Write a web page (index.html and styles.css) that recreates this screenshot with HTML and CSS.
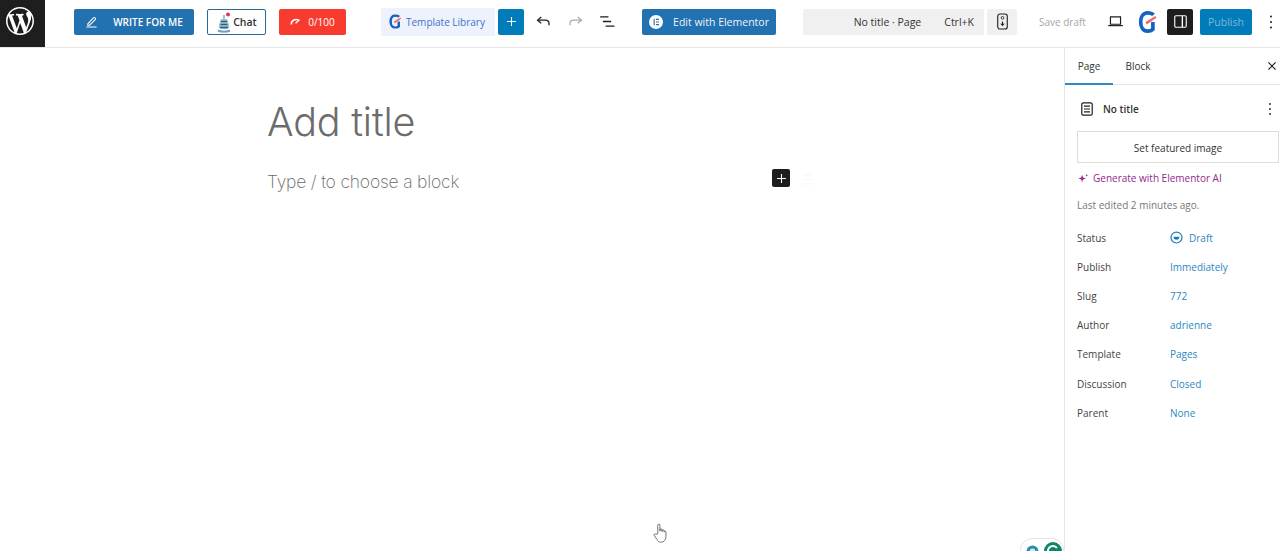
FILE: index.html
```html
<!DOCTYPE html>
<html lang="en">
<head>
<meta charset="utf-8">
<title>Add title</title>
<link rel="stylesheet" href="styles.css">
</head>
<body>
<div class="app">
  <header class="topbar">
    <a class="wp-logo"><svg viewBox="0 0 20 20" width="28" height="28"><path fill="#fff" fill-rule="evenodd" d="M20 10c0-5.51-4.49-10-10-10C4.48 0 0 4.49 0 10c0 5.52 4.48 10 10 10 5.51 0 10-4.48 10-10zM7.78 15.37L4.37 6.22c.55-.02 1.17-.08 1.17-.08.5-.06.44-1.13-.06-1.11 0 0-1.45.11-2.37.11-.18 0-.37 0-.58-.01C4.12 2.69 6.87 1.11 10 1.11c2.33 0 4.45.87 6.05 2.34-.68-.11-1.65.39-1.65 1.58 0 .74.45 1.36.9 2.1.35.61.55 1.36.55 2.46 0 1.49-1.4 5-1.4 5l-3.03-8.37c.54-.02.82-.17.82-.17.5-.05.44-1.25-.06-1.22 0 0-1.44.12-2.38.12-.87 0-2.33-.12-2.33-.12-.5-.03-.56 1.2-.06 1.22l.92.08 1.26 3.41zM17.41 10c.24-.64.74-1.87.43-4.25.7 1.29 1.05 2.71 1.05 4.25 0 3.29-1.73 6.24-4.4 7.78.97-2.59 1.94-5.2 2.92-7.78zM6.1 18.09C3.12 16.65 1.11 13.53 1.11 10c0-1.3.23-2.48.72-3.59C3.25 10.3 4.67 14.2 6.1 18.09zm4.03-6.63l2.58 6.98c-.86.29-1.76.45-2.71.45-.79 0-1.57-.11-2.29-.33.81-2.38 1.62-4.74 2.42-7.1z"/></svg></a>

    <button class="btn write"><svg viewBox="0 0 14 14" width="13" height="13" fill="none" stroke="#fff" stroke-width="1.1"><path d="M3 9.500 9 3.200a1.300 1.300 0 0 1 2 1.800L5 11H3zM1.500 13h11"/></svg><span>WRITE FOR ME</span></button>

    <button class="btn chat"><svg class="bot" viewBox="0 0 16 22" width="16" height="22"><circle cx="12" cy="2.500" r="2" fill="#d8365a"/><path d="M8 3v4" stroke="#5b8fb0" stroke-width="1.200"/><path d="M4 9c0-3 8-3 8 0l1.500 6c0 3-10 3-11 0z" fill="#a9c5d6"/><path d="M5 9.500h6M4.500 12.500h7M4 15.500h8" stroke="#2a5f82" stroke-width="1.300"/><path d="M2 18.500c3 1.500 9 1.500 12 0" fill="none" stroke="#6fa2c0" stroke-width="2"/></svg><span>Chat</span></button>

    <button class="btn score"><svg viewBox="0 0 14 10" width="12" height="9" fill="none" stroke="#fff" stroke-width="1.800"><path d="M1.500 8.500a5.500 5.500 0 0 1 9-4.500"/><path d="M6.500 7 11 3" stroke-width="1.400"/></svg><span>0/100</span></button>

    <div class="tpl"><svg viewBox="0 0 16 18" width="13" height="15"><use href="#g-logo"/></svg><span>Template Library</span></div>

    <button class="btn add"><svg viewBox="0 0 12 12" width="11" height="11"><path d="M6 1v10M1 6h10" stroke="#fff" stroke-width="1.200"/></svg></button>

    <svg class="ic undo" viewBox="0 0 16 12" width="15" height="11" fill="none" stroke="#1e1e1e" stroke-width="1.400"><path d="M5.500 1 1.500 4.500l4 3.500"/><path d="M2 4.500h8c2.500 0 4 1.400 4 3.500v2"/></svg>
    <svg class="ic redo" viewBox="0 0 16 12" width="15" height="11" fill="none" stroke="#a8a8a8" stroke-width="1.400"><path d="m10.500 1 4 3.500-4 3.500"/><path d="M14 4.500H6C3.500 4.500 2 5.900 2 8v2"/></svg>
    <svg class="ic list" viewBox="0 0 16 12" width="15" height="11" stroke="#1e1e1e" stroke-width="1.400"><path d="M0 1h9M3 6h9M6 11h9.500"/></svg>

    <button class="btn elementor"><svg viewBox="0 0 14 14" width="14" height="14"><circle cx="7" cy="7" r="7" fill="#fff"/><path d="M4.600 3.800h1.100v6.400H4.600zM7 3.800h3v1.100H7zM7 6.450h3v1.100H7zM7 9.100h3v1.100H7z" fill="#2271b1"/></svg><span>Edit with Elementor</span></button>

    <div class="search"><span class="doc">No title · Page</span><span class="key">Ctrl+K</span></div>
    <div class="mini"><svg viewBox="0 0 12 18" width="11" height="17" fill="none" stroke="#1e1e1e"><rect x=".8" y=".8" width="10.400" height="16.400" rx="2.500" stroke-width="1.200"/><circle cx="6" cy="5" r="1.500" stroke-width=".9"/><path d="M6 9v4" stroke-width="1.200"/><path d="m4 11.500 2 2.200 2-2.200" fill="#1e1e1e" stroke-width=".8"/></svg></div>

    <span class="save">Save draft</span>
    <svg class="ic laptop" viewBox="0 0 16 12" width="15" height="11" fill="none" stroke="#1e1e1e" stroke-width="1.300"><path d="M2.500 1h11v8h-11z"/><path d="M0 10.500h16"/></svg>
    <svg class="ic glogo" viewBox="0 0 16 18" width="20" height="22"><symbol id="g-logo" viewBox="0 0 16 18"><path d="M12.500 3.200C11 1.500 9 1.500 7.500 1.500 4 1.500 2 5 2 9s2 7.500 5.500 7.500c2 0 3.500-.5 4.500-1.500V9" fill="none" stroke="#1562c4" stroke-width="3"/><path d="m7 11 8-5.500-1-1.500-8 5z" fill="#ef6a6a"/></symbol><use href="#g-logo"/></svg>

    <button class="btn panel"><svg viewBox="0 0 14 14" width="13" height="13" fill="none" stroke="#fff" stroke-width="1.200"><rect x=".8" y=".8" width="12.400" height="12.400" rx="1.300"/><path d="M9 1v12" stroke-width="1.500"/></svg></button>
    <button class="btn publish">Publish</button>
    <svg class="ic kebab" viewBox="0 0 4 16" width="4" height="16" fill="#1e1e1e"><circle cx="2" cy="2.500" r="1"/><circle cx="2" cy="8" r="1"/><circle cx="2" cy="13.500" r="1"/></svg>
  </header>

  <div class="workspace">
    <main class="canvas">
      <h1 class="title">Add title</h1>
      <div class="block-row">
        <p class="placeholder">Type / to choose a block</p>
        <button class="inserter"><svg viewBox="0 0 10 10" width="9" height="9"><path d="M5 0v10M0 5h10" stroke="#fff" stroke-width="1.200"/></svg></button>
        <svg class="ghost" viewBox="0 0 10 12" width="9" height="11" stroke="#f5f5f5"><path d="M0 1h10M0 6h10M0 11h10"/></svg>
      </div>
    </main>

    <aside class="sidebar">
      <div class="tabs">
        <span class="tab on">Page</span>
        <span class="tab">Block</span>
        <svg class="close" viewBox="0 0 10 10" width="8" height="8" stroke="#1e1e1e" stroke-width="1.500"><path d="m.5.500 9 9M9.500.500l-9 9"/></svg>
      </div>
      <div class="doc-row">
        <svg viewBox="0 0 12 14" width="12" height="14" fill="none" stroke="#1e1e1e" stroke-width="1.200"><rect x=".8" y=".8" width="10.400" height="12.400" rx="1.500"/><path d="M3 4.200h6M3 7h6M3 9.800h6"/></svg>
        <strong>No title</strong>
        <svg class="more" viewBox="0 0 4 14" width="4" height="14" fill="#1e1e1e"><circle cx="2" cy="2" r=".9"/><circle cx="2" cy="7" r=".9"/><circle cx="2" cy="12" r=".9"/></svg>
      </div>
      <button class="featured">Set featured image</button>
      <a class="gen"><svg viewBox="0 0 12 12" width="11" height="11" fill="#93278f"><path d="m4.500 2 1 3 3 1-3 1-1 3-1-3-3-1 3-1zM9.500 1l.4 1.100 1.100.4-1.100.4-.4 1.100-.4-1.100L8 2.500l1.100-.4z"/></svg>Generate with Elementor AI</a>
      <p class="edited">Last edited 2 minutes ago.</p>
      <dl class="meta">
        <dt>Status</dt><dd class="status"><svg viewBox="0 0 14 14" width="13" height="13" fill="none" stroke="#1a7fb8" stroke-width="1.300"><circle cx="7" cy="7" r="5.900"/><path d="M3.800 6.200h6.400a3.200 3.200 0 0 1-6.400 0z" fill="#1a7fb8" stroke="none"/></svg>Draft</dd>
        <dt>Publish</dt><dd>Immediately</dd>
        <dt>Slug</dt><dd>772</dd>
        <dt>Author</dt><dd>adrienne</dd>
        <dt>Template</dt><dd>Pages</dd>
        <dt>Discussion</dt><dd>Closed</dd>
        <dt>Parent</dt><dd>None</dd>
      </dl>
    </aside>
  </div>

  <div class="grammarly">
    <svg viewBox="0 0 14 14" width="13" height="13"><circle cx="7" cy="7" r="6.500" fill="#2a8fa8"/><circle cx="7" cy="7" r="3.200" fill="#cfe9ef"/></svg>
    <svg viewBox="0 0 18 18" width="18" height="18"><circle cx="9" cy="9" r="9" fill="#0d8568"/><path d="M13 6a5 5 0 1 0 .5 5H9" fill="none" stroke="#fff" stroke-width="2"/></svg>
  </div>
  <svg class="cursor" viewBox="0 0 16 22" width="15" height="20" fill="#fff" stroke="#555" stroke-width=".9"><path d="M5 12V2.500a1.200 1.200 0 0 1 2.400 0V9l.1-1.500a1.100 1.100 0 0 1 2.200 0V9.500l.1-1a1.100 1.100 0 0 1 2.200 0v1.500a1 1 0 0 1 2 0V15c0 3-2 6-5 6H8c-2 0-3-1-4-3l-3-4.500c-.5-1 .8-2 1.600-1.200z"/></svg>
</div>
</body>
</html>
```
FILE: styles.css
```css
* { box-sizing: border-box; }
html, body { margin: 0; height: 100%; overflow: hidden; background: #fff; }
body { font-family: "Open Sans", "Noto Sans", sans-serif; font-size: 10.5px; color: #1e1e1e; }
button { font: inherit; border: 0; padding: 0; cursor: pointer; }
svg { display: block; flex: none; }

.app { position: relative; display: flex; flex-direction: column; height: 551px; }

.topbar { display: flex; align-items: center; height: 48px; flex: none; padding-bottom: 4px; border-bottom: 1px solid #e6e6e6; }
.wp-logo { width: 45px; height: 47px; margin-bottom: -4px; padding: 0 6px 5px 0; background: #1e1e1e; display: flex; align-items: center; justify-content: center; }

.btn { display: flex; align-items: center; justify-content: center; height: 26px; border-radius: 2px; color: #fff; }
.write { width: 120px; margin-left: 29px; background: #2271b1; font-size: 10px; font-weight: 600; gap: 15px; }
.chat { width: 59px; margin-left: 13px; background: #fff; border: 1px solid #2a6a94; color: #333; font-weight: 600; gap: 1px; }
.bot { margin-top: 2px; }
.score { width: 67px; margin-left: 13px; background: #f73c2f; font-size: 10px; font-weight: 500; gap: 6px; }
.tpl { display: flex; align-items: center; gap: 4px; width: 114px; height: 28px; margin-left: 35px; padding-left: 8px; background: #edf2fc; color: #3f71cf; font-size: 10px; font-weight: 500; }
.add { width: 26px; margin-left: 3px; background: #007cba; }
.ic { flex: none; }
.undo { margin-left: 12px; }
.redo { margin-left: 17px; }
.list { margin-left: 17px; }
.elementor { width: 134px; margin-left: 27px; background: #2271b1; gap: 10px; font-weight: 500; color: #eef4f9; }
.search { display: flex; align-items: center; justify-content: flex-end; width: 181px; height: 26px; margin-left: 27px; padding-right: 10px; background: #f0f0f0; border-radius: 2px; }
.doc { margin-right: 23px; color: #333; }
.key { color: #333; }
.mini { display: flex; align-items: center; justify-content: center; width: 30px; height: 26px; margin-left: 3px; background: #f0f0f0; border-radius: 2px; }
.save { margin-left: 22px; width: 47px; white-space: nowrap; font-size: 10px; color: #a6a6a6; }
.laptop { margin-left: 22px; }
.glogo { margin-left: 15px; }
.panel { width: 26px; margin-left: 9px; background: #1e1e1e; }
.publish { width: 52px; margin-left: 7px; background: #007cba; color: #7fb8d8; }
.kebab { margin-left: 17px; }

.workspace { display: flex; flex: 1; min-height: 0; }
.canvas { flex: 1; min-width: 0; padding: 51px 0 0 267px; }
.title { margin: 0; font-family: Inter, sans-serif; font-size: 39.5px; line-height: 46px; font-weight: 300; color: #6c6c6c; letter-spacing: -.2px; }
.block-row { display: flex; align-items: flex-start; margin-top: 24px; }
.placeholder { margin: 0; width: 505px; font-family: Inter, sans-serif; font-size: 17.5px; line-height: 26px; font-weight: 200; color: #666; letter-spacing: -.2px; }
.inserter { display: flex; align-items: center; justify-content: center; width: 18px; height: 18px; background: #1e1e1e; border-radius: 2px; }
.ghost { margin: 5px 0 0 13px; }

.sidebar { width: 216px; flex: none; border-left: 1px solid #e6e6e6; font-size: 10px; }
.tabs { display: flex; align-items: center; position: relative; height: 37px; border-bottom: 1px solid #e6e6e6; }
.tab { width: 48px; height: 37px; line-height: 36px; text-align: center; color: #333; }
.tab + .tab { margin-left: 1px; }
.tab.on { border-bottom: 2px solid #2f8ac4; }
.close { margin-left: auto; margin-right: 4px; }
.doc-row { display: flex; align-items: center; height: 19px; margin: 14px 0 0 16px; }
.doc-row strong { margin-left: 10px; font-weight: 600; color: #333; }
.more { margin-left: auto; margin-right: 8px; }
.featured { display: block; width: 202px; height: 32px; margin: 13px 0 0 12px; padding-top: 1px; background: #fff; border: 1px solid #dcdcdc; color: #333; font-size: 10px; }
.gen { display: flex; align-items: center; gap: 4px; height: 16px; margin: 7px 0 0 13px; color: #93278f; }
.edited { margin: 11px 0 0 12px; line-height: 16px; color: #777; }
.meta { display: grid; grid-template-columns: 93px 1fr; grid-auto-rows: 29.2px; align-items: center; margin: 10px 0 0 12px; }
.meta dt { color: #444; }
.meta dd { margin: 0; color: #2b87c0; }
.meta .status { display: flex; align-items: center; gap: 6px; }

.grammarly { position: absolute; left: 1020px; top: 538px; display: flex; align-items: center; gap: 5px; width: 44px; height: 24px; padding: 2px 0 0 5px; background: #fff; border: 1px solid #e4e4e4; border-radius: 12px; overflow: hidden; }
.cursor { position: absolute; left: 653px; top: 523px; }
```
